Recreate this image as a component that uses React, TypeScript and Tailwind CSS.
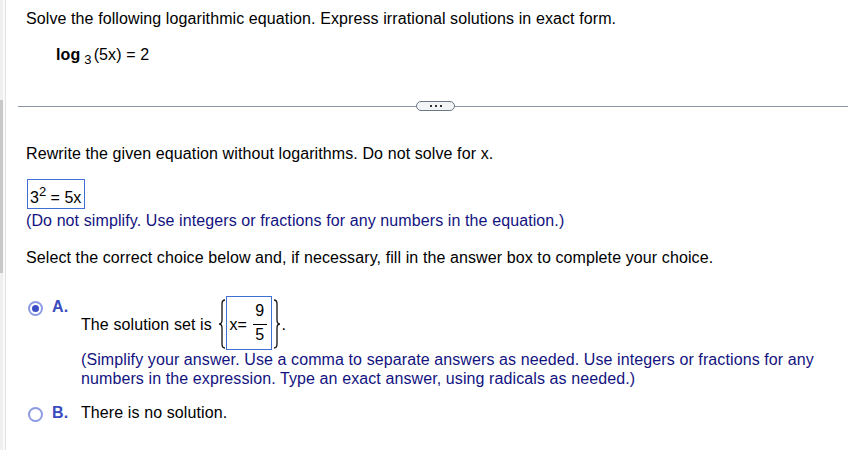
import React from "react";

function Brace({ right = false }: { right?: boolean }) {
  return (
    <svg width="8" height="50" viewBox="0 0 8 50" className={right ? "-scale-x-100" : ""}>
      <path
        d="M7 1 Q4 1 4 5 L4 21 Q4 25 1 25 Q4 25 4 29 L4 45 Q4 49 7 49"
        fill="none"
        stroke="#111"
        strokeWidth="1.3"
      />
    </svg>
  );
}

function Radio({ checked }: { checked: boolean }) {
  return (
    <div className="w-[15px] h-[15px] rounded-full border-2 border-[#8d9be3] bg-white flex items-center justify-center">
      {checked && <div className="w-[7px] h-[7px] rounded-full bg-[#3b4ec6]" />}
    </div>
  );
}

export default function App() {
  return (
    <div
      className="w-[848px] h-[450px] bg-white overflow-hidden flex text-black text-[16px] tracking-[0.1px]"
      style={{ fontFamily: '"Liberation Sans", Arial, sans-serif' }}
    >
      {/* left scroll strip */}
      <div className="w-[3px] h-full bg-[#f0f0f0] flex flex-col">
        <div className="h-[100px]" />
        <div className="h-[173px] bg-[#c9c9c9]" />
      </div>
      <div className="w-[2px] h-full bg-[#fafafa]" />
      <div className="w-[1px] h-full bg-[#e2e2e2]" />

      {/* main */}
      <div className="flex-1 flex flex-col">
        <div className="pl-[20px] mt-[9.5px] leading-[18px] whitespace-nowrap">
          Solve the following logarithmic equation. Express irrational solutions in exact form.
        </div>
        <div className="pl-[50px] mt-[18px] h-[18px] leading-[18px] whitespace-nowrap flex items-start">
          <span className="font-bold">log</span>
          <span className="ml-[4px] text-[13px] leading-[18px] mt-[5px]">3</span>
          <span className="ml-[2px]">(5x) = 2</span>
        </div>

        {/* divider */}
        <div className="mt-[37.5px] h-[10px] flex items-center ml-[12px]">
          <div className="w-[398px] h-px bg-[#8a94a2]" />
          <div className="w-[39px] h-[10px] rounded-full border border-[#6c7888] bg-[#f3f4f6] flex items-center justify-center gap-[3px]">
            <div className="w-[2px] h-[2px] bg-[#333]" />
            <div className="w-[2px] h-[2px] bg-[#333]" />
            <div className="w-[2px] h-[2px] bg-[#333]" />
          </div>
          <div className="flex-1 h-px bg-[#8a94a2]" />
        </div>

        <div className="pl-[20px] mt-[33.5px] leading-[18px] whitespace-nowrap">
          Rewrite the given equation without logarithms. Do not solve for x.
        </div>

        <div className="ml-[21px] mt-[16.5px] w-[58px] h-[30px] border border-[#3f6fd0] pl-[2px] flex items-start tracking-normal">
          <span className="mt-[8.5px] leading-[18px]">3</span>
          <span className="text-[13px] leading-[13px] mt-[5px]">2</span>
          <span className="mt-[8.5px] leading-[18px] whitespace-pre"> = 5x</span>
        </div>

        <div className="pl-[20px] mt-[2.5px] leading-[18px] whitespace-nowrap text-[#13137f]">
          (Do not simplify. Use integers or fractions for any numbers in the equation.)
        </div>

        <div className="pl-[20px] mt-[19px] leading-[18px] whitespace-nowrap">
          Select the correct choice below and, if necessary, fill in the answer box to complete your choice.
        </div>

        {/* option A */}
        <div className="mt-[29px] flex items-start">
          <div className="w-[75px] pl-[22px] mt-[2.5px] h-[18px] flex items-center">
            <div className="mt-[3px]">
              <Radio checked />
            </div>
            <span className="ml-[9px] font-bold text-[#3a4bbd] leading-[18px]">A.</span>
          </div>
          <div className="flex flex-col">
            <div className="flex items-start">
              <span className="mt-[20.5px] leading-[18px] whitespace-pre">The solution set is </span>
              <div className="mt-[3px] ml-[2px]">
                <Brace />
              </div>
              <div className="w-[46px] h-[54px] border border-[#3f6fd0] pl-[2px] flex items-start tracking-normal">
                <span className="mt-[19.5px] leading-[18px]">x=</span>
                <div className="ml-[6px] mt-[6.5px] flex flex-col items-center w-[14px]">
                  <span className="leading-[16px]">9</span>
                  <div className="mt-[4.5px] w-[14px] h-px bg-black" />
                  <span className="mt-[2.5px] leading-[16px]">5</span>
                </div>
              </div>
              <div className="mt-[3px] ml-[1px]">
                <Brace right />
              </div>
              <span className="mt-[20.5px] leading-[18px]">.</span>
            </div>
            <div className="leading-[19px] text-[#13137f] whitespace-nowrap">
              (Simplify your answer. Use a comma to separate answers as needed. Use integers or fractions for any
              <br />
              numbers in the expression. Type an exact answer, using radicals as needed.)
            </div>
          </div>
        </div>

        {/* option B */}
        <div className="mt-[16.5px] flex items-start">
          <div className="w-[75px] pl-[22px] h-[18px] flex items-center">
            <div className="mt-[2px]">
              <Radio checked={false} />
            </div>
            <span className="ml-[9px] font-bold text-[#3a4bbd] leading-[18px]">B.</span>
          </div>
          <span className="leading-[18px]">There is no solution.</span>
        </div>
      </div>
    </div>
  );
}
